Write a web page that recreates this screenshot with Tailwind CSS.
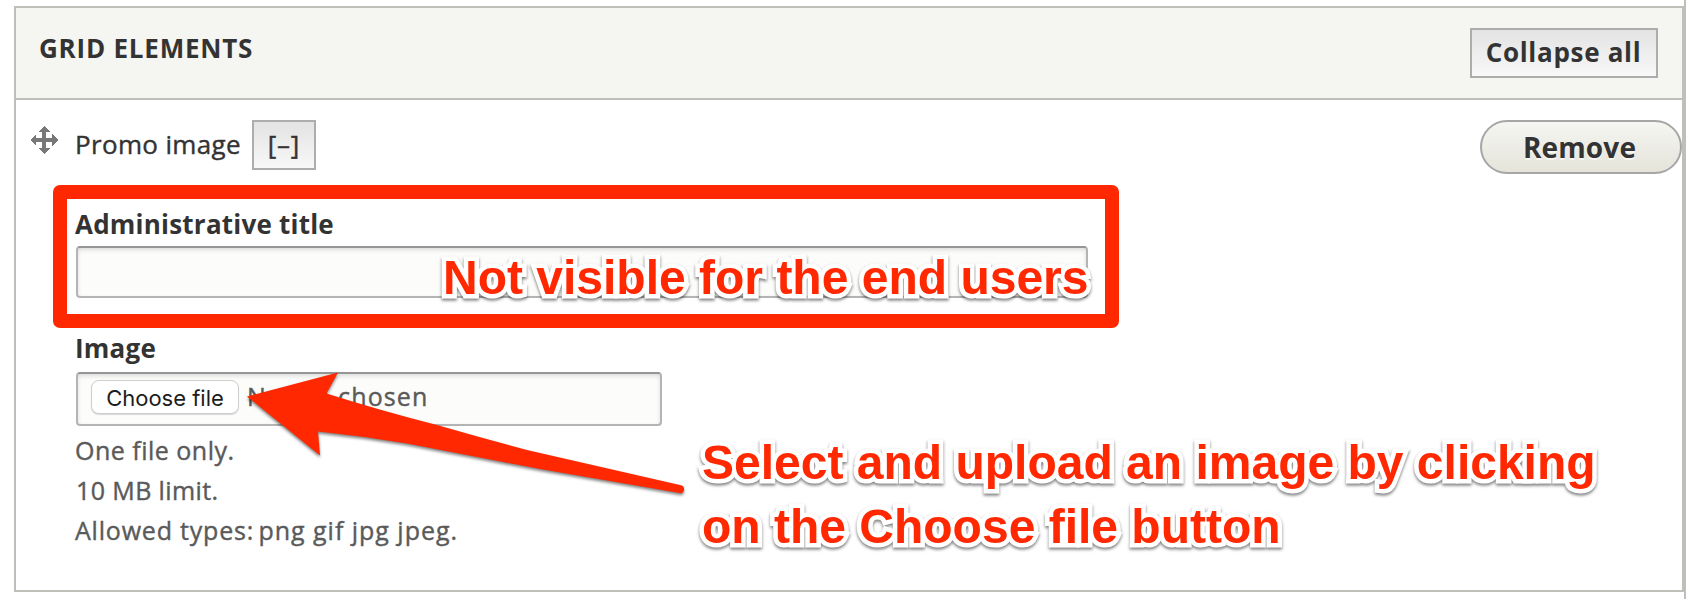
<!DOCTYPE html>
<html lang="en">
<head>
<meta charset="utf-8">
<title>Grid elements</title>
<script src="https://cdn.jsdelivr.net/npm/@tailwindcss/browser@4"></script>
</head>
<body class="bg-white">
<div class="relative h-[599px] w-[1686px] overflow-hidden border-r-2 border-[#bebfb9] pl-[14px] pt-[6px] font-['Open_Sans',sans-serif] text-[26px] leading-[30px] text-[#333]">
  <section class="h-[586px] w-[1670px] border-2 border-[#bebfb9] bg-white">
    <header class="flex h-[92px] items-start justify-between border-b-2 border-[#bebfb9] bg-[#f5f5f1] pl-[23px] pr-6">
      <h2 class="mt-[25px] font-bold tracking-[0.78px]">GRID ELEMENTS</h2>
      <button class="mt-5 h-[50px] w-[188px] whitespace-nowrap border-2 border-[#adaeab] bg-linear-to-b from-[#e3e3e3] to-[#f8f8f8] pb-[2px] pr-[1px] font-bold tracking-[0.7px]">Collapse all</button>
    </header>
    <div class="mt-5 flex h-[54px] items-start">
      <svg class="ml-[14px] mt-[6px] size-7 shrink-0" viewBox="0 0 28 28" fill="#787878" shape-rendering="crispEdges">
        <path d="M14 0L20 6H16V12H22V8L28 14L22 20V16H16V22H20L14 28L8 22H12V16H6V20L0 14L6 8V12H12V6H8Z"/>
      </svg>
      <span class="ml-[17px] mt-[9px] w-[177px] whitespace-nowrap tracking-[0.34px] [-webkit-text-stroke:0.4px_#333]">Promo image</span>
      <button class="h-[50px] w-16 border-2 border-[#adaeab] bg-linear-to-b from-[#e3e3e3] to-[#f8f8f8] pb-[2px] tracking-[0.75px] [-webkit-text-stroke:0.4px_#333]">[–]</button>
      <button class="ml-auto h-[54px] w-[202px] rounded-full border-2 border-[#a6a6a6] bg-linear-to-b from-[#f6f6f2] to-[#e4e4da] pb-[1px] pr-[3px] text-[28px] font-bold tracking-[0.14px] [text-shadow:0_2px_0_rgba(255,255,255,0.6)]">Remove</button>
    </div>
    <div class="ml-[60px] mt-[35px]">
      <label class="-ml-px block h-[37px] font-bold tracking-[0.22px]">Administrative title</label>
      <div class="h-[52px] w-[1012px] rounded-[4px] border-2 border-[#b4b4b4] border-t-[#969696] bg-[#fcfcfa] shadow-[inset_0_2px_4px_rgba(0,0,0,0.13)]"></div>
      <label class="-ml-px mt-[35px] block h-[39px] font-bold tracking-[0.24px]">Image</label>
      <div class="flex h-[54px] w-[586px] items-start rounded-[4px] border-2 border-[#b4b4b4] border-t-[#969696] bg-[#fcfcfa] pl-[13px] pt-[6px] shadow-[inset_0_2px_4px_rgba(0,0,0,0.13)]">
        <button class="h-[34px] w-[148px] whitespace-nowrap rounded-[8px] border border-[#cfcfcf] bg-white pt-px font-['Inter',sans-serif] text-[22px] leading-[32px] text-[#1c1c1c] shadow-[0_1px_1px_rgba(0,0,0,0.15)]">Choose file</button>
        <span class="ml-[8px] mt-px whitespace-nowrap text-[25px] tracking-[1.14px] text-[#5a5a5a] [-webkit-text-stroke:0.4px_#5a5a5a]">No file chosen</span>
      </div>
      <div class="mt-[4px] text-[25px] leading-10 text-[#5a5a5a] [-webkit-text-stroke:0.4px_#5a5a5a]">
        <p class="-ml-px tracking-[0.49px]">One file only.</p>
        <p class="tracking-[0.39px]">10 MB limit.</p>
        <p class="-ml-px tracking-[0.8px]">Allowed types: <span class="-ml-[3px] tracking-[0.98px]">png gif jpg jpeg.</span></p>
      </div>
    </div>
  </section>

  <!-- Annotations drawn over the form -->
  <div class="absolute left-[52.5px] top-[185px] h-[143px] w-[1066.5px] rounded-[7px] border-[14px] border-[#ff2800] bg-transparent"></div>
  <svg class="absolute left-0 top-0 h-[599px] w-[1686px] [filter:drop-shadow(0_2px_1.5px_rgba(0,0,0,0.5))]" viewBox="0 0 1686 599">
    <path fill="#ff2800" d="M247 396.5L338 372.5L326.5 393.5Q382 411 437 425Q482 438 527 450L681 485.2A4.2 4.2 0 0 1 681 493.3L540 469L407 443.5Q362 436 318 431.5L320 455.5Z"/>
  </svg>
  <p class="absolute left-[443px] top-[250px] whitespace-nowrap font-['Liberation_Sans',sans-serif] text-[48px] font-bold leading-[56px] text-[#ff2800] [paint-order:stroke_fill] [-webkit-text-stroke:9px_white] [filter:drop-shadow(0_2px_1.5px_rgba(0,0,0,0.5))]">Not visible for the end users</p>
  <p class="absolute left-[702px] top-[431px] whitespace-nowrap font-['Liberation_Sans',sans-serif] text-[48px] font-bold leading-[64px] text-[#ff2800] [paint-order:stroke_fill] [-webkit-text-stroke:9px_white] [filter:drop-shadow(0_2px_1.5px_rgba(0,0,0,0.5))]">Select and upload an image by clicking<br>on the Choose file button</p>
</div>
</body>
</html>
